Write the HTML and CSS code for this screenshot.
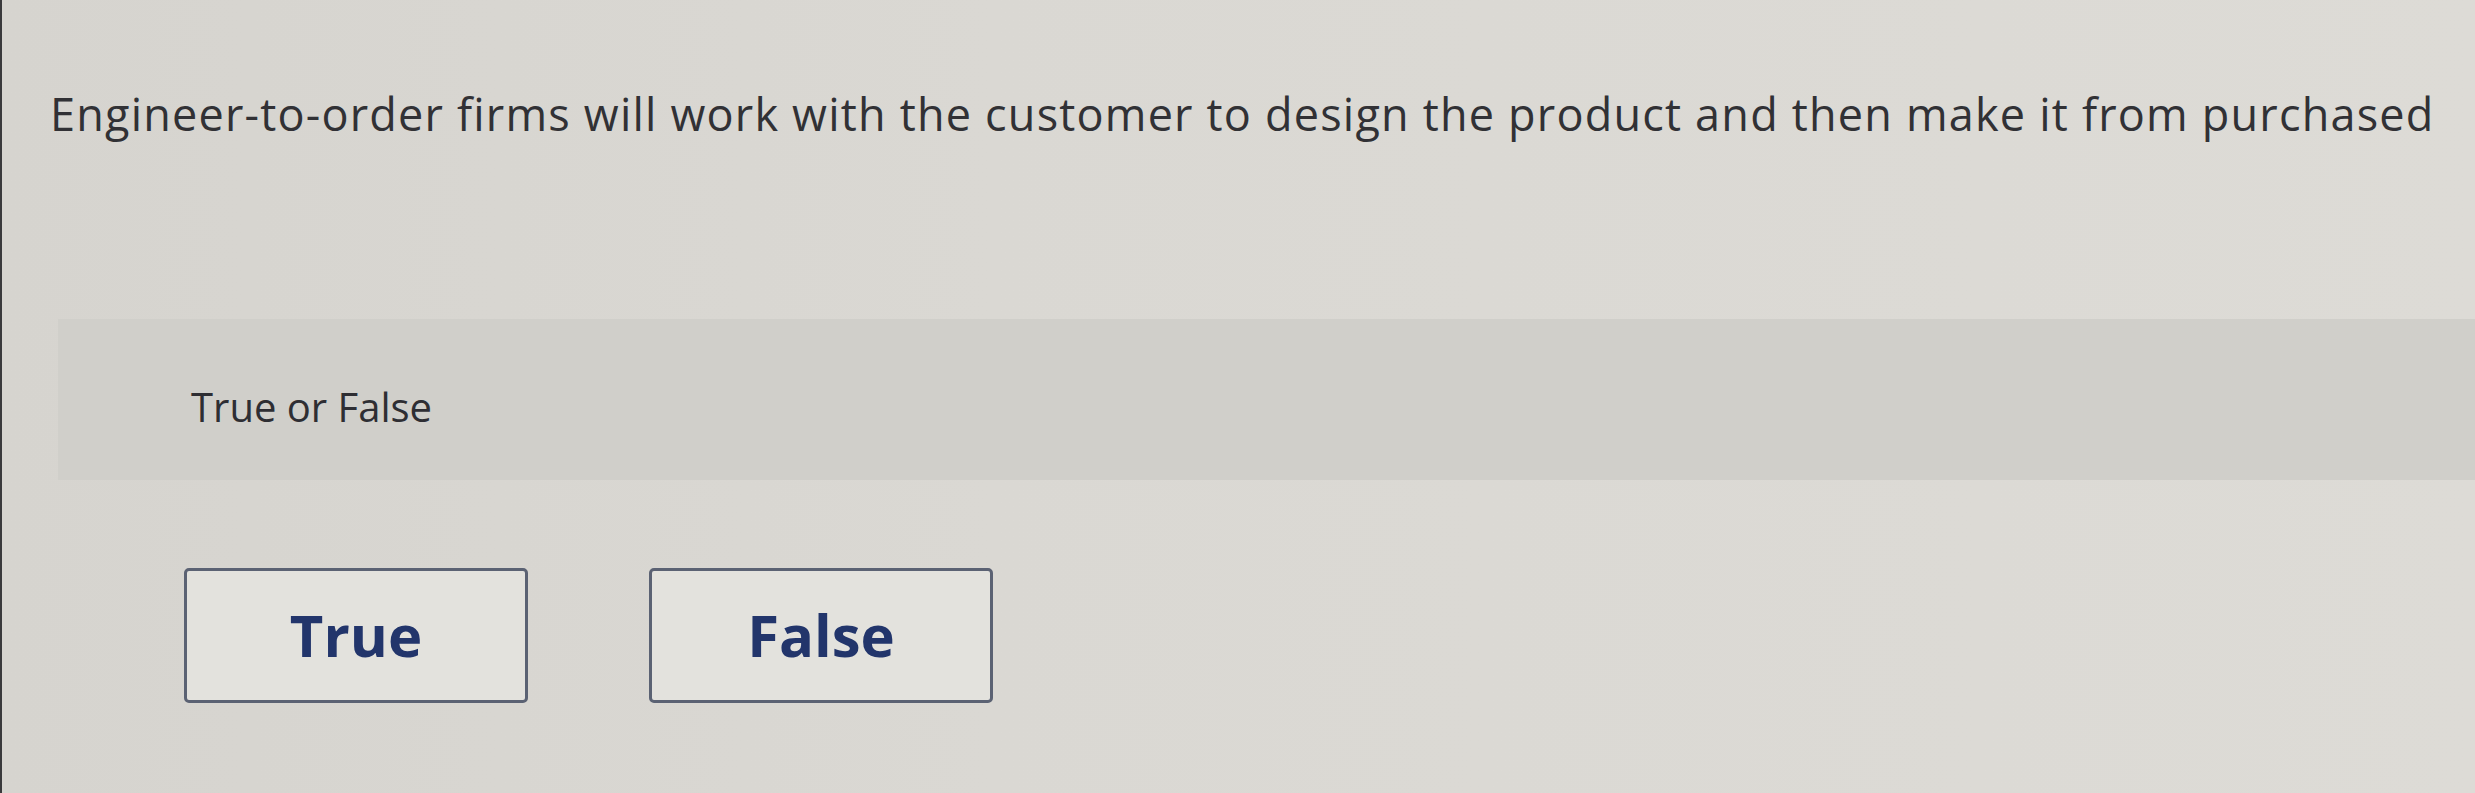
FILE: index.html
```html
<!DOCTYPE html>
<html lang="en">
  <head>
    <meta charset="UTF-8" />
    <title>Question</title>
    <link rel="stylesheet" href="styles.css">
  </head>
  <body>
    <div class="page">
      <p class="prompt">Engineer-to-order firms will work with the customer to design the product and then make it from purchased</p>
      <div class="qtype">
        <span>True or False</span>
      </div>
      <div class="choices">
        <button type="button" class="choice">True</button>
        <button type="button" class="choice">False</button>
      </div>
    </div>
  </body>
</html>
```

FILE: styles.css
```css
html,
body {
  margin: 0;
  height: 100%;
  overflow: hidden;
}
body {
  background: #d8d7d2;
  font-family: "Open Sans", "Liberation Sans", Arial, sans-serif;
  color: #2b2b2e;
}
.page {
  height: 100%;
  border-left: 2px solid #3a3a3c;
  background: linear-gradient(90deg, #d6d4cf 0%, #dad8d3 40%, #dddbd6 100%);
}
.prompt {
  margin: 0;
  padding: 89px 0 0 48px;
  font-size: 45px;
  line-height: 49px;
  letter-spacing: 1.2px;
  white-space: nowrap;
  color: #313135;
}
.qtype {
  margin: 181px 0 0 56px;
  height: 161px;
  background: #d0cfca;
  display: flex;
  align-items: center;
  padding: 14px 0 0 133px;
  box-sizing: border-box;
  font-size: 40px;
  color: #2e2e33;
}
.choices {
  display: flex;
  gap: 121px;
  padding: 88px 0 0 182px;
}
.choice {
  width: 344px;
  height: 135px;
  padding-bottom: 4px;
  background: #e3e2dd;
  border: 3px solid #5b6273;
  border-radius: 5px;
  font-family: "Open Sans", "Liberation Sans", Arial, sans-serif;
  font-size: 58px;
  font-weight: 700;
  color: #22356b;
  cursor: pointer;
}
```
